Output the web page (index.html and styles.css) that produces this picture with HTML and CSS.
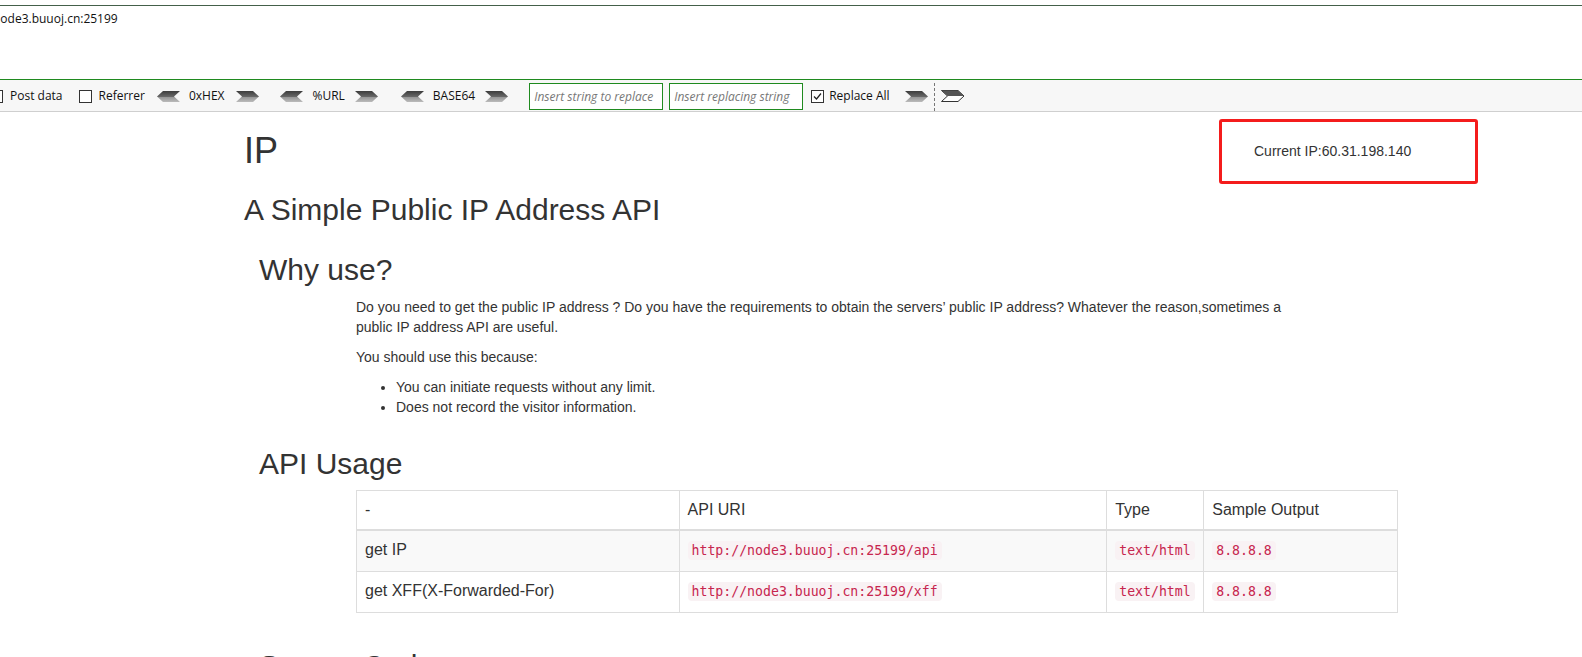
FILE: index.html
```html
<!DOCTYPE html>
<html>
<head>
<meta charset="utf-8">
<title>IP</title>
<link rel="stylesheet" href="styles.css">
</head>
<body>
<div class="page">
<div class="urlbar">
  <div class="url">node3.buuoj.cn:25199</div>
</div>
<div class="toolbar">
  <span class="cb cb-first"></span><span class="lbl">Post data</span>
  <span class="cb cb-gap"></span><span class="lbl">Referrer</span>
  <svg class="arr arr-l g1" width="23" height="11" viewBox="0 0 23 11"><defs><linearGradient id="ga" x1="0" y1="0" x2="0" y2="1"><stop offset="0" stop-color="#3c3c3c"/><stop offset="0.5" stop-color="#666"/><stop offset="0.55" stop-color="#959595"/><stop offset="1" stop-color="#bbb"/></linearGradient></defs><polygon points="0,5.5 6,0 23,0 17,5.5 23,11 6,11" fill="url(#ga)"/></svg>
  <span class="lbl enc">0xHEX</span>
  <svg class="arr arr-r r1" width="23" height="11" viewBox="0 0 23 11"><polygon points="23,5.5 17,0 0,0 6,5.5 0,11 17,11" fill="url(#ga)"/></svg>
  <svg class="arr arr-l g2 g2a" width="23" height="11" viewBox="0 0 23 11"><polygon points="0,5.5 6,0 23,0 17,5.5 23,11 6,11" fill="url(#ga)"/></svg>
  <span class="lbl enc">%URL</span>
  <svg class="arr arr-r" width="23" height="11" viewBox="0 0 23 11"><polygon points="23,5.5 17,0 0,0 6,5.5 0,11 17,11" fill="url(#ga)"/></svg>
  <svg class="arr arr-l g2" width="23" height="11" viewBox="0 0 23 11"><polygon points="0,5.5 6,0 23,0 17,5.5 23,11 6,11" fill="url(#ga)"/></svg>
  <span class="lbl enc">BASE64</span>
  <svg class="arr arr-r" width="23" height="11" viewBox="0 0 23 11"><polygon points="23,5.5 17,0 0,0 6,5.5 0,11 17,11" fill="url(#ga)"/></svg>
  <span class="inp inp1">Insert string to replace</span>
  <span class="inp inp2">Insert replacing string</span>
  <span class="cb cb-checked"><svg width="11" height="11" viewBox="0 0 11 11"><polyline points="2,5.5 4.5,8 9,2.5" fill="none" stroke="#222" stroke-width="1.2"/></svg></span><span class="lbl ra-lbl">Replace All</span>
  <svg class="arr arr-r go" width="23" height="11" viewBox="0 0 23 11"><polygon points="23,5.5 17,0 0,0 6,5.5 0,11 17,11" fill="url(#ga)"/></svg>
  <span class="sep"></span>
  <svg class="arr arr-r out" width="24" height="12" viewBox="0 0 24 12"><polygon points="23,6 17,0.5 0.5,0.5 6.5,6 0.5,11.5 17,11.5" fill="#fff" stroke="#333" stroke-width="1"/><polygon points="6.5,6 0.5,0.5 17,0.5 23,6" fill="#555"/></svg>
</div>

<div class="content">
  <h1>IP</h1>
  <h2 class="subtitle">A Simple Public IP Address API</h2>
  <div class="section">
    <h2 class="sec-title first">Why use?</h2>
    <div class="section-body">
      <p>Do you need to get the public IP address ? Do you have the requirements to obtain the servers’ public IP address? Whatever the reason,sometimes a public IP address API are useful.</p>
      <p>You should use this because:</p>
      <ul>
        <li>You can initiate requests without any limit.</li>
        <li>Does not record the visitor information.</li>
      </ul>
    </div>
    <h2 class="sec-title">API Usage</h2>
    <div class="section-body">
      <table>
        <colgroup><col class="c1"><col class="c2"><col class="c3"><col class="c4"></colgroup>
        <thead>
          <tr><th>-</th><th>API URI</th><th>Type</th><th>Sample Output</th></tr>
        </thead>
        <tbody>
          <tr class="odd"><td>get IP</td><td><code>http://node3.buuoj.cn:25199/api</code></td><td><code>text/html</code></td><td><code>8.8.8.8</code></td></tr>
          <tr><td>get XFF(X-Forwarded-For)</td><td><code>http://node3.buuoj.cn:25199/xff</code></td><td><code>text/html</code></td><td><code>8.8.8.8</code></td></tr>
        </tbody>
      </table>
    </div>
    <h2 class="sec-title last">Source Code</h2>
  </div>
</div>

<div class="ipbox">Current IP:60.31.198.140</div>
</div>
</body>
</html>
```
FILE: styles.css
```css
html, body {
  margin: 0;
  padding: 0;
  background: #fff;
}
body {
  font-family: "Liberation Sans", Arial, sans-serif;
  font-size: 14px;
  line-height: 1.42857;
  color: #333;
}
.page {
  position: relative;
  height: 657px;
  padding-top: 5px;
  box-sizing: border-box;
  overflow: hidden;
}

/* URL area */
.urlbar {
  border-top: 1px solid #44604a;
  height: 73px;
}
.url {
  font-family: "Open Sans", "Noto Sans", sans-serif;
  font-size: 12px;
  line-height: 16px;
  color: #111;
  margin-left: -7px;
  padding-top: 5px;
}

/* hackbar toolbar */
.toolbar {
  border-top: 1px solid #1f8a1f;
  border-bottom: 1px solid #cfcfcf;
  background: #f7f7f7;
  height: 30px;
  padding-top: 1px;
  display: flex;
  align-items: center;
  font-family: "Open Sans", "Noto Sans", sans-serif;
  font-size: 12px;
  color: #111;
  white-space: nowrap;
}
.cb {
  width: 11px;
  height: 11px;
  border: 1px solid #333;
  background: #fff;
  flex: none;
  display: flex;
  align-items: center;
  justify-content: center;
}
.cb-first { margin-left: -10px; }
.cb-gap { margin-left: 16px; }
.lbl { margin-left: 7px; }
.arr { flex: none; display: block; }
.arr-l { margin-left: 12px; }
.arr-l.g2 { margin-left: 23px; }
.arr-l.g2.g2a { margin-left: 21px; }
.lbl.enc { margin-left: 9px; }
.arr-r { margin-left: 10px; }
.arr-r.r1 { margin-left: 12px; }
.inp {
  flex: none;
  box-sizing: border-box;
  height: 27px;
  border: 1px solid #1f8a1f;
  background: #fff;
  color: #777;
  font-style: italic;
  padding: 0 0 0 4px;
  line-height: 25px;
  overflow: hidden;
}
.inp1 { width: 134px; margin-left: 21px; }
.inp2 { width: 134px; margin-left: 6px; }
.cb-checked { margin-left: 8px; }
.lbl.ra-lbl { margin-left: 5px; }
.arr-r.go { margin-left: 15px; }
.sep {
  align-self: stretch;
  margin: 2px 0 0 6px;
  border-left: 1px dashed #777;
}
.arr-r.out { margin-left: 6px; }

/* content */
.content {
  padding-left: 244px;
}
h1 {
  font-size: 36px;
  font-weight: 500;
  line-height: 1.1;
  margin: 19px 0 10px;
}
h2 {
  font-size: 30px;
  font-weight: 500;
  line-height: 1.1;
  margin: 20px 0 10px;
}
h2.subtitle { margin-top: 22px; }
h2.sec-title { margin-top: 29px; }
h2.sec-title.first { margin: 27px 0 12px; }
h2.sec-title.last { margin-top: 36px; }
.section { margin-left: 15px; }
.section-body { margin-left: 97px; }
p {
  margin: 0 0 10px;
  max-width: 950px;
}
ul {
  margin: 0 0 10px;
  padding-left: 40px;
}
table {
  border-collapse: collapse;
  width: 1042px;
  margin-bottom: 20px;
}
.c1 { width: 323px; }
.c2 { width: 428px; }
.c3 { width: 97px; }
.c4 { width: 194px; }
th, td {
  border: 1px solid #ddd;
  text-align: left;
  vertical-align: top;
  font-weight: normal;
  font-size: 16px;
  line-height: 20px;
}
th { padding: 9px 8px; border-bottom-width: 2px; }
td { padding: 9px 8px 10px; }
tr.odd td { background: #f9f9f9; }
code {
  font-family: "DejaVu Sans Mono", monospace;
  font-size: 13.2px;
  padding: 2px 4px;
  color: #c7254e;
  background: #f9f2f4;
  border-radius: 4px;
}

/* annotation */
.ipbox {
  position: absolute;
  left: 1219px;
  top: 119px;
  width: 253px;
  height: 59px;
  border: 3px solid #f41c1c;
  border-radius: 3px;
  line-height: 59px;
  text-indent: 32px;
  font-size: 14px;
}
```
